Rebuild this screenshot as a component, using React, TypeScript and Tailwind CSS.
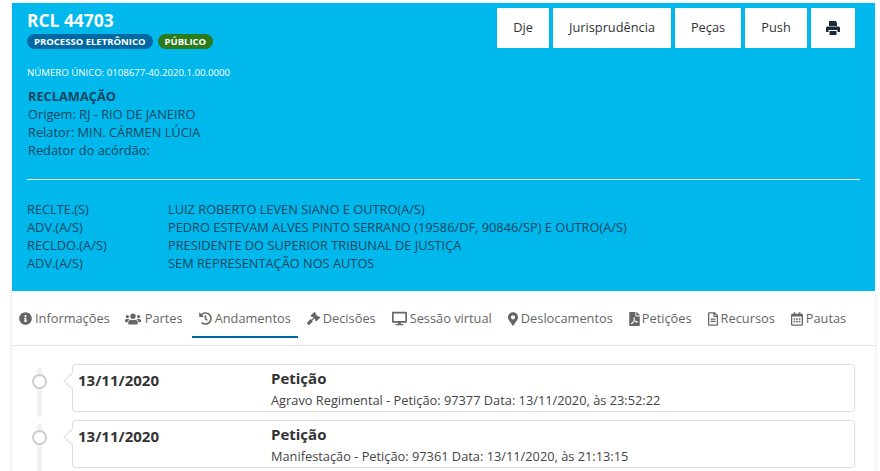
import {
  FaDesktop,
  FaFilePdf,
  FaGavel,
  FaHistory,
  FaInfoCircle,
  FaMapMarkerAlt,
  FaRegCalendarAlt,
  FaRegFileAlt,
  FaUsers,
} from 'react-icons/fa'

const BUTTONS = [
  { label: 'Dje', width: 'w-[52px]' },
  { label: 'Jurisprudência', width: 'w-[118px]' },
  { label: 'Peças', width: 'w-[66px]' },
  { label: 'Push', width: 'w-[62px]' },
]

const PARTIES = [
  ['RECLTE.(S)', 'LUIZ ROBERTO LEVEN SIANO E OUTRO(A/S)'],
  ['ADV.(A/S)', 'PEDRO ESTEVAM ALVES PINTO SERRANO (19586/DF, 90846/SP) E OUTRO(A/S)'],
  ['RECLDO.(A/S)', 'PRESIDENTE DO SUPERIOR TRIBUNAL DE JUSTIÇA'],
  ['ADV.(A/S)', 'SEM REPRESENTAÇÃO NOS AUTOS'],
]

const TABS = [
  { label: 'Informações', icon: FaInfoCircle, iconClass: 'h-[13px] w-[13px]', gap: 'gap-[3px]', box: 'pl-[7px] pr-[6px]' },
  { label: 'Partes', icon: FaUsers, iconClass: 'h-[16px] w-[16px]', gap: 'gap-[4px]', box: 'px-[7px]' },
  { label: 'Andamentos', icon: FaHistory, iconClass: 'h-[13px] w-[13px]', gap: 'gap-[3px]', box: 'px-[7px]', active: true },
  { label: 'Decisões', icon: FaGavel, iconClass: 'h-[13px] w-[13px]', gap: 'gap-[3px]', box: 'px-[7px]' },
  { label: 'Sessão virtual', icon: FaDesktop, iconClass: 'h-[15px] w-[15px]', gap: 'gap-[3px]', box: 'px-[7px]' },
  { label: 'Deslocamentos', icon: FaMapMarkerAlt, iconClass: 'h-[14px] w-[10px]', gap: 'gap-[3px]', box: 'px-[7px]' },
  { label: 'Petições', icon: FaFilePdf, iconClass: 'h-[14px] w-[11px]', gap: 'gap-[2px]', box: 'px-[7px]' },
  { label: 'Recursos', icon: FaRegFileAlt, iconClass: 'h-[14px] w-[10px]', gap: 'gap-[3px]', box: 'px-[7px]' },
  { label: 'Pautas', icon: FaRegCalendarAlt, iconClass: 'h-[14px] w-[12px]', gap: 'gap-[3px]', box: 'px-[7px]' },
]

const EVENTS = [
  { date: '13/11/2020', title: 'Petição', detail: 'Agravo Regimental - Petição: 97377 Data: 13/11/2020, às 23:52:22' },
  { date: '13/11/2020', title: 'Petição', detail: 'Manifestação - Petição: 97361 Data: 13/11/2020, às 21:13:15' },
]

// solid printer, the icon pack's version has a hollow sheet
function PrintIcon() {
  return (
    <svg viewBox="0 0 14 14" className="h-[14px] w-[14px] text-[#1b2a3a]" fill="currentColor">
      <path d="M3 0h6.5L11 1.5V5H3z" />
      <path fillRule="evenodd" d="M1.5 5.5h11c.8 0 1.5.7 1.5 1.5v4h-2.5V9h-9v2H0V7c0-.8.7-1.5 1.5-1.5z" />
      <path d="M3.5 10h7v4h-7z" />
    </svg>
  )
}

export default function App() {
  return (
    <div className="h-[471px] w-[880px] overflow-hidden bg-white pt-[3px] font-['Open_Sans',sans-serif]">
      <div className="ml-[12px] h-[500px] w-[863px] shadow-[0_0_3px_rgba(0,0,0,0.15)]">
        {/* process header */}
        <header className="h-[288px] bg-[#00b8ec] px-[15px]">
          <div className="flex justify-between">
            <div className="pt-[5px]">
              <h1 className="text-[17.4px] leading-[24px] font-bold text-white">RCL 44703</h1>
              <div className="mt-[2px] flex gap-[5px] text-[9.5px] leading-[15px] font-bold text-white">
                <span className="rounded-full bg-[#0069a3] px-[7px]">PROCESSO ELETRÔNICO</span>
                <span className="rounded-full bg-[#2b7a1b] px-[7px]">PÚBLICO</span>
              </div>
            </div>
            <div className="mt-[5px] mr-[5px] flex gap-[4px]">
              {BUTTONS.map((b) => (
                <button
                  key={b.label}
                  type="button"
                  className={`${b.width} h-[40px] bg-white text-[12.8px] text-[#333]`}
                >
                  {b.label}
                </button>
              ))}
              <button type="button" className="flex h-[40px] w-[44px] items-center justify-center bg-white">
                <PrintIcon />
              </button>
            </div>
          </div>

          <p className="mt-[17px] text-[9.64px] leading-[13px] text-white">NÚMERO ÚNICO: 0108677-40.2020.1.00.0000</p>

          <div className="mt-[8px] pl-px text-[12.8px] leading-[18px] text-[#14465f]">
            <div className="font-bold">RECLAMAÇÃO</div>
            <div>Origem: RJ - RIO DE JANEIRO</div>
            <div>Relator: MIN. CÁRMEN LÚCIA</div>
            <div>Redator do acórdão:</div>
          </div>

          <hr className="mt-[20px] border-white" />

          <div className="mt-[20px] text-[12.8px] leading-[18px] text-[#14465f]">
            {PARTIES.map(([role, name], i) => (
              <div key={i} className="flex">
                <span className="w-[141px] shrink-0">{role}</span>
                <span>{name}</span>
              </div>
            ))}
          </div>
        </header>

        {/* tabs */}
        <nav className="flex h-[55px] items-start gap-[2px] border-b border-[#e4e4e4] pt-[14px]">
          {TABS.map((t) => (
            <div
              key={t.label}
              className={`flex h-[33px] items-center ${t.gap} ${t.box} border-b-2 pb-[4px] text-[12.8px] text-[#666] ${
                t.active ? 'border-[#0069a3]' : 'border-transparent'
              }`}
            >
              <t.icon className={`${t.iconClass} shrink-0`} />
              <span>{t.label}</span>
            </div>
          ))}
        </nav>

        {/* timeline */}
        <div className="flex flex-col gap-[8px] pt-[18px]">
          {EVENTS.map((e, i) => (
            <div key={i} className="flex">
              <div className="relative ml-[20px] w-[17px]">
                <div className="absolute top-[4px] left-[5px] h-[49px] w-[5px] rounded-full bg-[#f0f0f0]" />
                <div className="absolute top-[10px] left-0 h-[15px] w-[15px] rounded-full border-2 border-[#ccc] bg-white" />
              </div>
              <div className="relative ml-[23px] flex h-[48px] w-[783px] rounded-[3px] border border-[#ddd] bg-white">
                <div className="absolute top-[10px] left-[-7px] h-[12px] w-[12px] rotate-45 border-b border-l border-[#ddd] bg-white" />
                <div className="w-[198px] pl-[5px] pt-[5px] text-[15px] leading-[20px] font-bold text-[#333]">{e.date}</div>
                <div className="pt-[3px]">
                  <div className="text-[15px] leading-[20px] font-bold text-[#333]">{e.title}</div>
                  <div className="mt-[3px] text-[12.8px] leading-[18px] text-[#444]">{e.detail}</div>
                </div>
              </div>
            </div>
          ))}
        </div>
      </div>
    </div>
  )
}
